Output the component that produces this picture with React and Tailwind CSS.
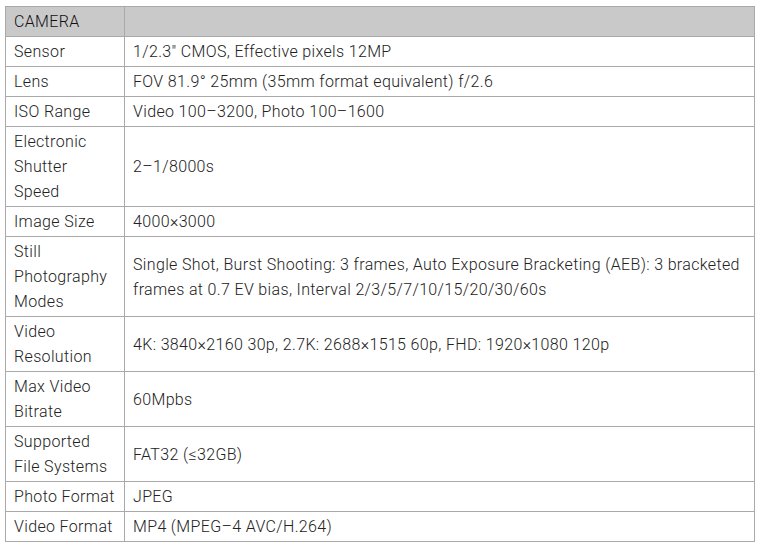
const rows = [
  ['Sensor', '1/2.3" CMOS, Effective pixels 12MP'],
  ['Lens', 'FOV 81.9° 25mm (35mm format equivalent) f/2.6'],
  ['ISO Range', 'Video 100–3200, Photo 100–1600'],
  ['Electronic Shutter Speed', '2–1/8000s'],
  ['Image Size', '4000×3000'],
  ['Still Photography Modes', 'Single Shot, Burst Shooting: 3 frames, Auto Exposure Bracketing (AEB): 3 bracketed frames at 0.7 EV bias, Interval 2/3/5/7/10/15/20/30/60s'],
  ['Video Resolution', '4K: 3840×2160 30p, 2.7K: 2688×1515 60p, FHD: 1920×1080 120p'],
  ['Max Video Bitrate', '60Mpbs'],
  ['Supported File Systems', 'FAT32 (≤32GB)'],
  ['Photo Format', 'JPEG'],
  ['Video Format', 'MP4 (MPEG–4 AVC/H.264)'],
];

export default function App() {
  return (
    <div className="bg-white min-h-screen pt-[6px] pl-[5px]" style={{ fontFamily: 'Roboto, "Liberation Sans", sans-serif' }}>
      <table className="border-collapse w-[750px] table-fixed text-[16px] leading-[25px] tracking-[0.35px] font-light text-[#222]">
        <colgroup>
          <col className="w-[119px]" />
          <col />
        </colgroup>
        <thead>
          <tr className="bg-[#c9c9ca]">
            <th className="border border-[#a9a9a9] px-2 py-[2px] text-left font-light text-[#111]">CAMERA</th>
            <th className="border border-[#a9a9a9] px-2 py-[2px]"></th>
          </tr>
        </thead>
        <tbody>
          {rows.map(([label, value]) => (
            <tr key={label}>
              <td className="border border-[#a9a9a9] px-2 py-[2px] align-middle">{label}</td>
              <td className="border border-[#a9a9a9] px-2 py-[2px] align-middle">{value}</td>
            </tr>
          ))}
        </tbody>
      </table>
    </div>
  );
}
